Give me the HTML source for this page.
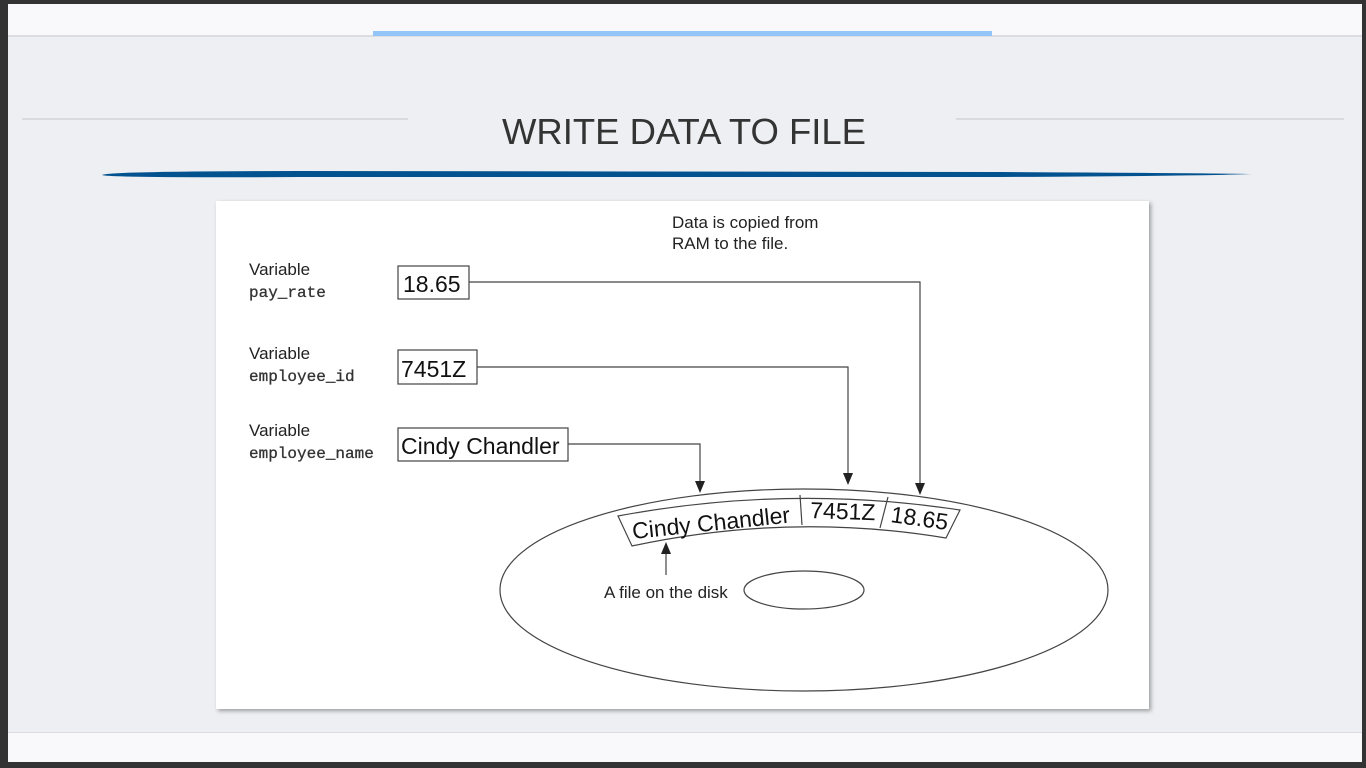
<!DOCTYPE html>
<html><head><style>
body{margin:0;width:1366px;height:768px;background:#333;overflow:hidden;position:relative;font-family:"Liberation Sans",sans-serif}
</style></head><body>
<svg width="1366" height="768" style="position:absolute;left:0;top:0">
<defs><filter id="sh" x="-5%" y="-5%" width="110%" height="110%"><feDropShadow dx="2" dy="2" stdDeviation="2" flood-color="#000" flood-opacity="0.35"/></filter></defs>
<rect x="8" y="4" width="1354" height="758" fill="#eeeff2"/>
<rect x="8" y="4" width="1354" height="31" fill="#f9f9fb"/>
<rect x="8" y="35" width="1354" height="2" fill="#dcdde0"/>
<rect x="373" y="31" width="619" height="5" fill="#94c5f8"/>
<rect x="8" y="733" width="1354" height="29" fill="#f9f9fb"/>
<rect x="8" y="732" width="1354" height="1" fill="#dcdde0"/>
<rect x="22" y="118" width="386" height="2" fill="#d9dadd"/>
<rect x="956" y="118" width="388" height="2" fill="#d9dadd"/>
<text x="502" y="144" font-size="36" fill="#333" font-family="Liberation Sans Narrow, Liberation Sans, sans-serif" textLength="364" lengthAdjust="spacingAndGlyphs">WRITE DATA TO FILE</text>
<path d="M102 175 Q110 171 300 171 L1000 172 Q1200 173 1252 174 Q1200 176 1000 177 L300 177 Q110 178 102 175Z" fill="#02528f"/>
<rect x="216" y="201" width="933" height="508" fill="#fff" filter="url(#sh)"/>
<g font-size="17" fill="#222">
<text x="249" y="275">Variable</text>
<text x="249" y="359">Variable</text>
<text x="249" y="436">Variable</text>
<text x="672" y="228">Data is copied from</text>
<text x="672" y="249">RAM to the file.</text>
<text x="604" y="598">A file on the disk</text>
</g>
<g font-size="16" fill="#333" font-family="Liberation Mono, monospace" stroke="#333" stroke-width="0.3">
<text x="249" y="297">pay_rate</text>
<text x="249" y="381">employee_id</text>
<text x="249" y="458">employee_name</text>
</g>
<g fill="#fff" stroke="#444" stroke-width="1.2">
<rect x="398" y="266" width="71" height="33"/>
<rect x="398" y="350" width="79" height="34"/>
<rect x="398" y="428" width="170" height="33"/>
</g>
<g font-size="23" fill="#111">
<text x="403" y="292">18.65</text>
<text x="401" y="377">7451Z</text>
<text x="401" y="454">Cindy Chandler</text>
</g>
<g fill="none" stroke="#444" stroke-width="1.2">
<polyline points="469,282 920,282 920,486"/>
<polyline points="477,367 848,367 848,476"/>
<polyline points="568,444 700,444 700,484"/>
<line x1="666" y1="575" x2="666" y2="550"/>
<ellipse cx="804" cy="590" rx="304" ry="101"/>
<ellipse cx="804" cy="590" rx="60" ry="19"/>
<path d="M618 516 Q790 484 960 510 L946 538 Q790 512 632 546 Z" fill="#fff"/>
<line x1="800" y1="495" x2="802" y2="525"/>
<line x1="888" y1="497" x2="880" y2="528"/>
</g>
<g fill="#222">
<path d="M920 495 L915 483 L925 483Z"/>
<path d="M848 485 L843 473 L853 473Z"/>
<path d="M700 493 L695 481 L705 481Z"/>
<path d="M666 542 L661 554 L671 554Z"/>
</g>
<g font-size="23" fill="#111">
<text x="633" y="539" transform="rotate(-6 633 539)">Cindy Chandler</text>
<text x="810" y="518" transform="rotate(2 810 518)">7451Z</text>
<text x="890" y="522" transform="rotate(8 890 522)">18.65</text>
</g>
</svg>
</body></html>
